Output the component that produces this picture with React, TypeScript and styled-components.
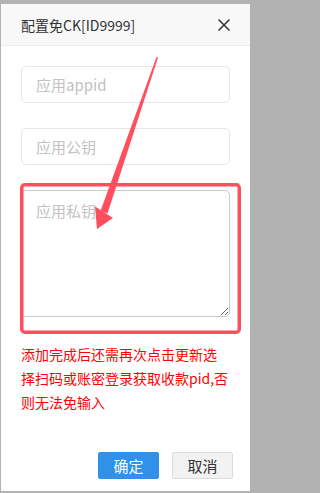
import styled, { createGlobalStyle } from "styled-components";

const GlobalStyle = createGlobalStyle`
  html, body {
    margin: 0;
    padding: 0;
    background: #b2b2b2;
  }
  body {
    font-family: "Microsoft YaHei", "Noto Sans CJK SC", "Noto Sans", sans-serif;
  }
`;

const Page = styled.div`
  width: 254px;
  height: 493px;
  padding: 4px 4px 2px 1px;
  box-sizing: border-box;
  position: relative;
  display: flex;
`;

const Dialog = styled.div`
  flex: 1;
  min-width: 0;
  background: #fff;
  display: flex;
  flex-direction: column;
`;

const Header = styled.div`
  height: 41px;
  flex: none;
  display: flex;
  align-items: center;
  justify-content: space-between;
  padding: 0 19px 0 20px;
  background: #f8f8f8;
  border-bottom: 1px solid #eee;
`;

const Title = styled.span`
  font-size: 14px;
  color: #333;
`;

const CloseButton = styled.button`
  width: 14px;
  height: 14px;
  padding: 0;
  border: 0;
  background: none;
  display: flex;
  align-items: center;
  justify-content: center;
  cursor: pointer;
`;

const Body = styled.div`
  display: flex;
  flex-direction: column;
  gap: 25px;
  padding: 20px 20px 0 20px;
`;

const Field = styled.input`
  height: 37px;
  min-width: 0;
  box-sizing: border-box;
  border: 1px solid #e6e6e6;
  border-radius: 5px;
  padding: 0 14px;
  font-family: inherit;
  font-size: 15px;
  color: #333;
  outline: none;

  &::placeholder {
    color: #c2c2c2;
  }
`;

const Area = styled.textarea`
  height: 127px;
  min-width: 0;
  box-sizing: border-box;
  border: 1px solid #c9c9cf;
  border-radius: 5px;
  padding: 8px 14px;
  font-family: inherit;
  font-size: 15px;
  line-height: 24px;
  color: #333;
  outline: none;
  resize: vertical;

  &::placeholder {
    color: #c2c2c2;
  }
`;

const Notice = styled.p`
  margin: 0;
  font-size: 14px;
  line-height: 24px;
  color: #ff0000;
  word-break: break-all;
`;

const Footer = styled.div`
  margin-top: auto;
  display: flex;
  align-items: center;
  justify-content: flex-end;
  gap: 13px;
  padding: 0 17px 12px 0;
`;

const Button = styled.button<{ $primary?: boolean }>`
  flex: none;
  width: 61px;
  height: 27px;
  box-sizing: border-box;
  border: 1px solid ${({ $primary }) => ($primary ? "#3190e8" : "#dcdcdc")};
  background: ${({ $primary }) => ($primary ? "#3190e8" : "#f2f2f2")};
  color: ${({ $primary }) => ($primary ? "#fff" : "#333")};
  border-radius: 2px;
  font-family: inherit;
  font-size: 15px;
  padding: 0;
  cursor: pointer;
`;

/* screenshot annotation: red box + arrow drawn on top */
const Markup = styled.svg`
  position: absolute;
  left: 0;
  top: 0;
  pointer-events: none;
`;

const MARK = "#ff4f5f";

const App = () => (
  <>
    <GlobalStyle />
    <Page>
      <Dialog>
        <Header>
          <Title>配置免CK[ID9999]</Title>
          <CloseButton aria-label="close">
            <svg width="12" height="12" viewBox="0 0 12 12">
              <path
                d="M0.5 0.5 L11.5 11.5 M11.5 0.5 L0.5 11.5"
                stroke="#333"
                strokeWidth="1.5"
                fill="none"
              />
            </svg>
          </CloseButton>
        </Header>
        <Body>
          <Field placeholder="应用appid" />
          <Field placeholder="应用公钥" />
          <Area placeholder="应用私钥" />
          <Notice>
            添加完成后还需再次点击更新选择扫码或账密登录获取收款pid,否则无法免输入
          </Notice>
        </Body>
        <Footer>
          <Button $primary>确定</Button>
          <Button>取消</Button>
        </Footer>
      </Dialog>
      <Markup width="254" height="493" viewBox="0 0 254 493">
        <rect
          x="21.75"
          y="184.75"
          width="217.5"
          height="147.5"
          rx="3"
          fill="none"
          stroke={MARK}
          strokeWidth="3.5"
        />
        <polygon
          points="156.5,57 158,57.5 107.5,213.5 100.5,211"
          fill={MARK}
        />
        <polygon points="95,206.5 113,218 97,229" fill={MARK} />
      </Markup>
    </Page>
  </>
);

export default App;
